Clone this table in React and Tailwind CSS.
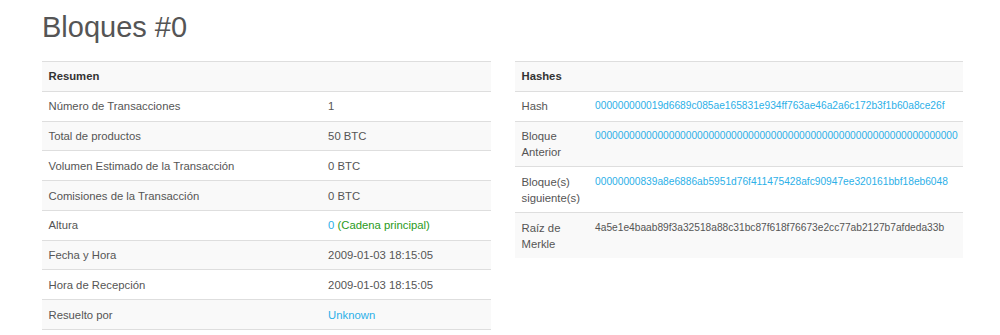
const summary = [
  ['Número de Transacciones', '1'],
  ['Total de productos', '50 BTC'],
  ['Volumen Estimado de la Transacción', '0 BTC'],
  ['Comisiones de la Transacción', '0 BTC'],
  ['Altura', 'height'],
  ['Fecha y Hora', '2009-01-03 18:15:05'],
  ['Hora de Recepción', '2009-01-03 18:15:05'],
  ['Resuelto por', 'miner'],
]

const hashes = [
  ['Hash', '000000000019d6689c085ae165831e934ff763ae46a2a6c172b3f1b60a8ce26f', true],
  ['Bloque Anterior', '0000000000000000000000000000000000000000000000000000000000000000', true],
  ['Bloque(s) siguiente(s)', '00000000839a8e6886ab5951d76f411475428afc90947ee320161bbf18eb6048', true],
  ['Raíz de Merkle', '4a5e1e4baab89f3a32518a88c31bc87f618f76673e2cc77ab2127b7afdeda33b', false],
]

const cell = 'px-[6.5px] py-[6.4px] leading-[16px]'

function SummaryValue({ value }) {
  if (value === 'height') {
    return (
      <span>
        <span className="text-[#2cb0e8]">0</span>{' '}
        <span className="text-[#2a9a1a]">(Cadena principal)</span>
      </span>
    )
  }
  if (value === 'miner') return <span className="text-[#2cb0e8]">Unknown</span>
  return <span>{value}</span>
}

export default function App() {
  return (
    <div
      className="bg-white text-[11.3px] text-[#555] pl-[42px] h-[335px] overflow-hidden"
      style={{ fontFamily: '"Liberation Sans", Arial, sans-serif' }}
    >
      <h1 className="pt-[11px] text-[29px] leading-[32px] text-[#555] mb-[18px]">Bloques #0</h1>

      <div className="flex gap-[24px] items-start">
        <div className="w-[449px] border-b border-[#dedede]">
          <div className="bg-[#f9f9f9] border-t border-[#dedede]">
            <div className={`${cell} font-bold text-[#333]`}>Resumen</div>
          </div>
          {summary.map(([label, value], i) => (
            <div
              key={label}
              className={`grid grid-cols-[279.6px_1fr] border-t border-[#dedede] ${i % 2 === 1 ? 'bg-[#f9f9f9]' : 'bg-white'}`}
            >
              <div className={cell}>{label}</div>
              <div className={cell}>
                <SummaryValue value={value} />
              </div>
            </div>
          ))}
        </div>

        <div className="w-[448px]">
          <div className="bg-[#f9f9f9] border-t border-[#dedede]">
            <div className={`${cell} font-bold text-[#333]`}>Hashes</div>
          </div>
          {hashes.map(([label, value, link], i) => (
            <div
              key={label}
              className={`grid grid-cols-[73.6px_1fr] border-t border-[#dedede] ${i % 2 === 1 ? 'bg-[#f9f9f9]' : 'bg-white'}`}
            >
              <div className={cell}>{label}</div>
              <div className={`${cell} whitespace-nowrap text-[10.2px] ${link ? 'text-[#2cb0e8]' : 'text-[#555]'}`}>
                {value}
              </div>
            </div>
          ))}
        </div>
      </div>
    </div>
  )
}
